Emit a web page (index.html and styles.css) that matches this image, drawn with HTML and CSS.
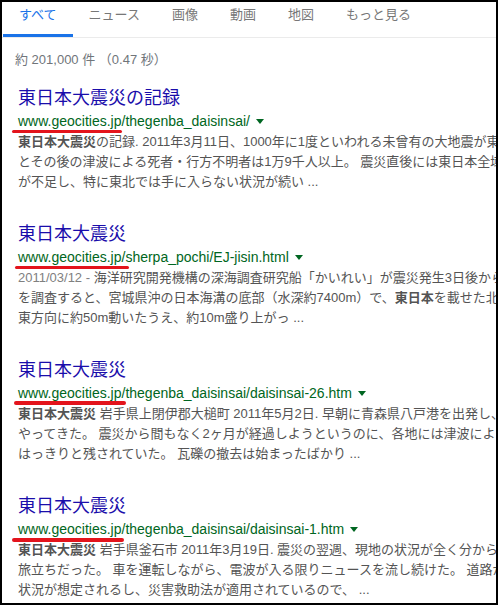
FILE: index.html
```html
<!DOCTYPE html>
<html lang="ja">
<head>
<meta charset="utf-8">
<title>東日本大震災 - 検索結果</title>
<link rel="stylesheet" href="styles.css">
</head>
<body>
<div class="frame">
  <nav class="tabs">
    <a class="tab active">すべて</a>
    <a class="tab">ニュース</a>
    <a class="tab">画像</a>
    <a class="tab">動画</a>
    <a class="tab">地図</a>
    <a class="tab">もっと見る</a>
  </nav>
  <div class="stats">約 201,000 件 （0.47 秒）</div>
  <div class="results">
    <div class="result">
      <h3 class="title">東日本大震災の記録</h3>
      <div class="url"><cite>www.geocities.jp/thegenba_daisinsai/</cite><span class="caret"></span><span class="mark mark-1"></span></div>
      <div class="snippet"><b>東日本大震災</b>の記録. 2011年3月11日、1000年に1度といわれる未曾有の大地震が東日本を襲った。 地震<br>とその後の津波による死者・行方不明者は1万9千人以上。 震災直後には東日本全域で物資<br>が不足し、特に東北では手に入らない状況が続い ...</div>
    </div>
    <div class="result">
      <h3 class="title">東日本大震災</h3>
      <div class="url"><cite>www.geocities.jp/sherpa_pochi/EJ-jisin.html</cite><span class="caret"></span><span class="mark mark-2"></span></div>
      <div class="snippet"><span class="date">2011/03/12 - </span>海洋研究開発機構の深海調査研究船「かいれい」が震災発生3日後から震源域<br>を調査すると、宮城県沖の日本海溝の底部（水深約7400m）で、<b>東日本</b>を載せた北米プレート<br>東方向に約50m動いたうえ、約10m盛り上がっ ...</div>
    </div>
    <div class="result">
      <h3 class="title">東日本大震災</h3>
      <div class="url"><cite>www.geocities.jp/thegenba_daisinsai/daisinsai-26.htm</cite><span class="caret"></span><span class="mark mark-3"></span></div>
      <div class="snippet"><b>東日本大震災</b> 岩手県上閉伊郡大槌町 2011年5月2日. 早朝に青森県八戸港を出発し、大槌町へ<br>やってきた。 震災から間もなく2ヶ月が経過しようというのに、各地には津波による爪痕が<br>はっきりと残されていた。 瓦礫の撤去は始まったばかり ...</div>
    </div>
    <div class="result">
      <h3 class="title">東日本大震災</h3>
      <div class="url"><cite>www.geocities.jp/thegenba_daisinsai/daisinsai-1.htm</cite><span class="caret"></span><span class="mark mark-4"></span></div>
      <div class="snippet"><b>東日本大震災</b> 岩手県釜石市 2011年3月19日. 震災の翌週、現地の状況が全く分からないままの<br>旅立ちだった。 車を運転しながら、電波が入る限りニュースを流し続けた。 道路が寸断<br>状況が想定されるし、災害救助法が適用されているので、 ...</div>
    </div>
  </div>
</div>
</body>
</html>
```

FILE: styles.css
```css
html, body {
  margin: 0;
  padding: 0;
  background: #fff;
}

body {
  font-family: "Liberation Sans", Arial, "Noto Sans CJK JP", sans-serif;
}

.frame {
  width: 498px;
  height: 605px;
  box-sizing: border-box;
  border: 2px solid #000;
  overflow: hidden;
  background: #fff;
}

.tabs {
  display: flex;
  height: 35px;
  padding-left: 1px;
  border-bottom: 1px solid #ebebeb;
}

.tab {
  box-sizing: border-box;
  height: 35px;
  padding: 3px 16px 0;
  font-size: 13px;
  line-height: 20px;
  color: #777;
  text-decoration: none;
  white-space: nowrap;
}

.tab.active {
  color: #1a73e8;
  border-bottom: 3px solid #1a73e8;
}

.stats {
  margin-top: 12px;
  padding-left: 13px;
  font-size: 13px;
  line-height: 20px;
  color: #70757a;
  white-space: nowrap;
}

.results {
  padding-left: 16px;
  margin-top: 16px;
}

.result {
  margin-bottom: 30px;
}

.title {
  margin: 0;
  font-size: 18px;
  line-height: 24px;
  font-weight: normal;
  color: #1a0dab;
  white-space: nowrap;
}

.url {
  position: relative;
  margin-top: 1px;
  font-size: 14px;
  line-height: 20px;
  color: #006621;
  white-space: nowrap;
}

.url cite {
  font-style: normal;
}

.caret {
  display: inline-block;
  margin-left: 6px;
  border-left: 4px solid transparent;
  border-right: 4px solid transparent;
  border-top: 5px solid #006621;
  vertical-align: 2px;
}

.mark {
  position: absolute;
  top: 19px;
  height: 3px;
  background: #e3141c;
  border-radius: 2px;
}

.mark-1 { left: -6px; width: 110px; }
.mark-2 { left: -3px; width: 114px; top: 19px; }
.mark-3 { left: -4px; width: 112px; top: 18px; height: 4px; }
.mark-4 { left: -6px; width: 112px; height: 4px; }

.snippet {
  margin-top: 1px;
  font-size: 13px;
  line-height: 20px;
  color: #545454;
  white-space: nowrap;
}

.snippet b {
  font-weight: bold;
}

.date {
  color: #808080;
}
```
